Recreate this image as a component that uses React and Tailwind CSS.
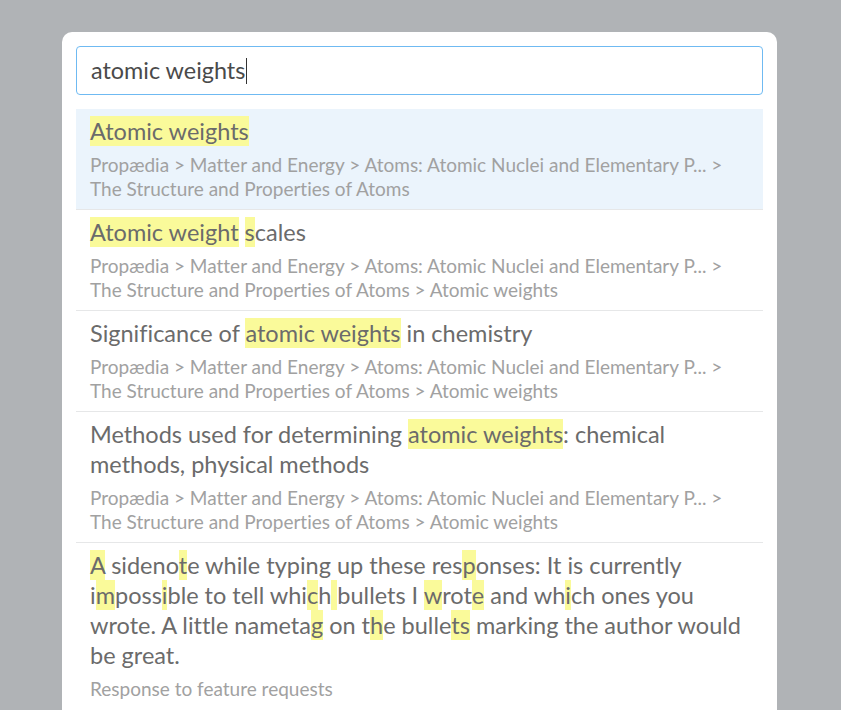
const crumbs = 'Propædia > Matter and Energy > Atoms: Atomic Nuclei and Elementary P... >';

function Hl({ children }) {
  return <span className="bg-[#fafa9a] py-[1px] whitespace-pre">{children}</span>;
}

const results = [
  {
    title: [<Hl key="a">Atomic weights</Hl>],
    sub: [crumbs, 'The Structure and Properties of Atoms'],
    active: true,
  },
  {
    title: [<Hl key="a">Atomic weight</Hl>, ' ', <Hl key="b">s</Hl>, 'cales'],
    sub: [crumbs, 'The Structure and Properties of Atoms > Atomic weights'],
  },
  {
    title: ['Significance of ', <Hl key="a">atomic weights</Hl>, ' in chemistry'],
    sub: [crumbs, 'The Structure and Properties of Atoms > Atomic weights'],
  },
  {
    title: ['Methods used for determining ', <Hl key="a">atomic weights</Hl>, ': chemical methods, physical methods'],
    sub: [crumbs, 'The Structure and Properties of Atoms > Atomic weights'],
  },
  {
    title: [
      <Hl key="1">A</Hl>, ' sideno', <Hl key="2">t</Hl>, 'e while typing up these res', <Hl key="3">p</Hl>,
      'onses: It is currently i', <Hl key="4">m</Hl>, 'poss', <Hl key="5">i</Hl>, 'ble to tell whi',
      <Hl key="6">c</Hl>, 'h', <Hl key="7"> </Hl>, 'bullets I ', <Hl key="8">w</Hl>, 'rot', <Hl key="9">e</Hl>,
      ' and wh', <Hl key="10">i</Hl>, 'ch ones you wrote. A little nameta', <Hl key="11">g</Hl>, ' on t',
      <Hl key="12">h</Hl>, 'e bulle', <Hl key="13">ts</Hl>, ' marking the author would be great.',
    ],
    sub: ['Response to feature requests'],
  },
];

export default function App() {
  return (
    <div className="min-h-screen bg-[#b0b3b6] pt-[32px] font-['Lato','Liberation_Sans',sans-serif] [font-variant-ligatures:none]">
      <div className="ml-[62px] w-[715px] h-[700px] overflow-hidden rounded-[10px] bg-white p-[14px]">
        <div className="flex h-[49px] items-center rounded-[4px] border border-[#6fbaf2] px-[14px] text-[23.4px] text-[#4a4a4a]">
          <span>atomic weights</span>
          <span className="ml-[1px] inline-block h-[26px] w-px bg-[#333]" />
        </div>
        <ul className="mt-[14px]">
          {results.map((r, i) => (
            <li
              key={i}
              className={`border-[#e6e7e8] px-[14px] pt-[7px] pb-[8px] ${i < results.length - 1 ? 'border-b' : ''} ${r.active ? 'bg-[#ebf4fc]' : ''}`}
            >
              <div className="text-[23.5px] leading-[30px] text-[#6b6b6b]">{r.title}</div>
              <div className="mt-[7px] text-[19px] leading-6 text-[#a1a1a1]">
                {r.sub.map((s, j) => (
                  <div key={j}>{s}</div>
                ))}
              </div>
            </li>
          ))}
        </ul>
      </div>
    </div>
  );
}
